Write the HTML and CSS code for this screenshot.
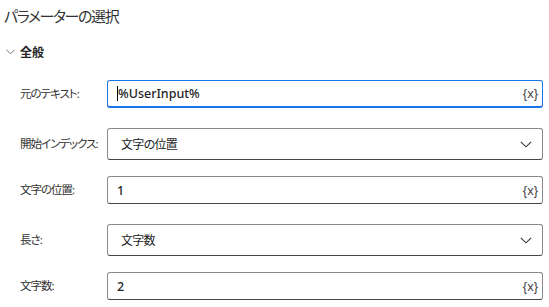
FILE: index.html
```html
<!DOCTYPE html>
<html lang="ja">
<head>
    <meta charset="UTF-8">
    <title>パラメーターの選択</title>
    <link rel="stylesheet" href="styles.css">
</head>
<body>

<div class="panel">
    <h1 class="title">パラメーターの選択</h1>

    <div class="section">
        <div class="section-head">
            <svg class="section-chevron" width="9" height="6" viewBox="0 0 9 6"><path d="M0.5 0.8 L4.5 4.8 L8.5 0.8" fill="none" stroke="#777" stroke-width="1"/></svg>
            <span>全般</span>
        </div>

        <div class="field">
            <label class="field-label">元のテキスト:</label>
            <div class="box box-text box-focus">
                <span class="caret"></span><span class="value">%UserInput%</span>
                <span class="var-btn">{x}</span>
            </div>
        </div>

        <div class="field">
            <label class="field-label">開始インデックス:</label>
            <div class="box box-select">
                <span class="option">文字の位置</span>
                <svg class="select-chevron" width="12" height="7" viewBox="0 0 12 7"><path d="M0.8 0.8 L6 5.8 L11.2 0.8" fill="none" stroke="#333" stroke-width="1.1"/></svg>
            </div>
        </div>

        <div class="field">
            <label class="field-label">文字の位置:</label>
            <div class="box box-text">
                <span class="value">1</span>
                <span class="var-btn">{x}</span>
            </div>
        </div>

        <div class="field">
            <label class="field-label">長さ:</label>
            <div class="box box-select">
                <span class="option">文字数</span>
                <svg class="select-chevron" width="12" height="7" viewBox="0 0 12 7"><path d="M0.8 0.8 L6 5.8 L11.2 0.8" fill="none" stroke="#333" stroke-width="1.1"/></svg>
            </div>
        </div>

        <div class="field">
            <label class="field-label">文字数:</label>
            <div class="box box-text">
                <span class="value">2</span>
                <span class="var-btn">{x}</span>
            </div>
        </div>
    </div>
</div>

</body>
</html>
```

FILE: styles.css
```css
body {
    margin: 0;
    background-color: white;
    font-family: "Noto Sans", "Noto Sans CJK JP", sans-serif;
    color: #242424;
}
.panel {
    padding: 4px 6px 0 4px;
}
.title {
    margin: 0;
    height: 36px;
    line-height: 24px;
    font-size: 15px;
    font-weight: normal;
    font-feature-settings: "palt";
    letter-spacing: -1.4px;
    color: #333;
}
.section-head {
    display: flex;
    align-items: center;
    gap: 5px;
    height: 24px;
    padding-left: 2px;
    margin-bottom: 16px;
    font-size: 12px;
    font-weight: bold;
    font-feature-settings: "palt";
}
.field {
    display: flex;
    align-items: flex-start;
    height: 48px;
}
.field-label {
    flex-shrink: 0;
    width: 87px;
    padding-left: 16px;
    white-space: nowrap;
    font-size: 11.5px;
    font-feature-settings: "palt";
    letter-spacing: -1px;
    color: #333;
}
.field:has(.box-text) .field-label {
    line-height: 28px;
}
.field:has(.box-select) .field-label {
    line-height: 32px;
}
.box {
    flex: 1;
    display: flex;
    align-items: center;
    box-sizing: border-box;
    border: 1px solid #8a8a8a;
    border-bottom-color: #444;
    border-radius: 3px;
    background-color: white;
}
.box-text {
    height: 28px;
    padding: 0 4px 0 9px;
}
.box-focus {
    border-color: #1a73e8;
    border-bottom-width: 2px;
}
.box-select {
    height: 32px;
    padding: 0 10px 0 13px;
}
.caret {
    width: 1px;
    height: 15px;
    background-color: #000;
}
.value {
    flex: 1;
    font-size: 12.5px;
    font-weight: 500;
    color: #242424;
}
.option {
    flex: 1;
    font-size: 12px;
    font-feature-settings: "palt";
    letter-spacing: -0.7px;
    color: #242424;
}
.var-btn {
    font-family: "Liberation Sans", sans-serif;
    font-size: 13px;
    color: #444;
}
.select-chevron {
    display: block;
}
```
